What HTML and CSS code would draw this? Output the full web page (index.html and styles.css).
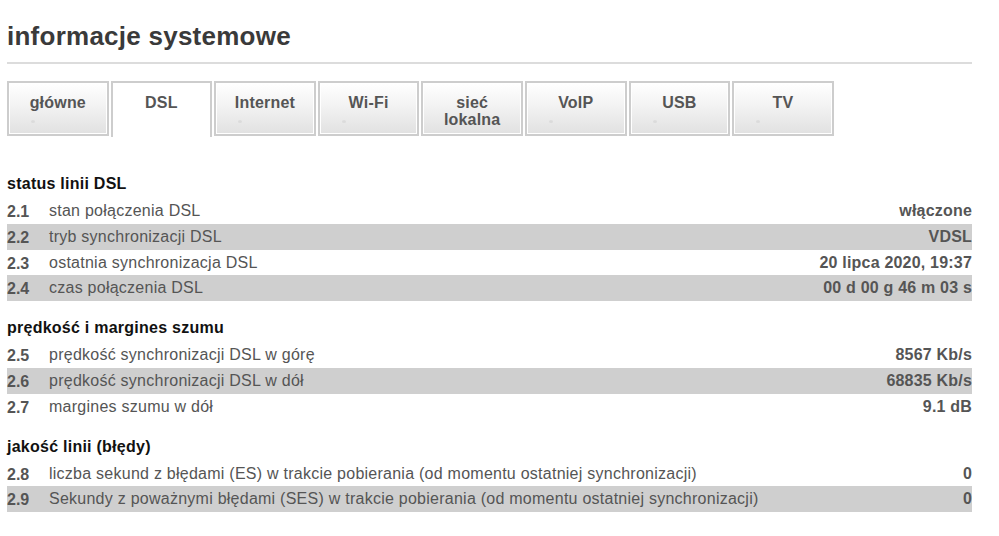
FILE: index.html
```
<!DOCTYPE html>
<html lang="pl">
<head>
<meta charset="utf-8">
<title>informacje systemowe</title>
<link rel="stylesheet" href="styles.css">
</head>
<body>
<div class="page">
  <h1 class="title">informacje systemowe</h1>
  <div class="tabs">
    <div class="tab">główne</div>
    <div class="tab active">DSL</div>
    <div class="tab">Internet</div>
    <div class="tab">Wi-Fi</div>
    <div class="tab">sieć<br>lokalna</div>
    <div class="tab">VoIP</div>
    <div class="tab">USB</div>
    <div class="tab">TV</div>
  </div>

  <div class="section first">
    <h3 class="sec-title">status linii DSL</h3>
    <div class="row"><span class="num">2.1</span><span class="label">stan połączenia DSL</span><span class="val">włączone</span></div>
    <div class="row alt"><span class="num">2.2</span><span class="label">tryb synchronizacji DSL</span><span class="val">VDSL</span></div>
    <div class="row"><span class="num">2.3</span><span class="label">ostatnia synchronizacja DSL</span><span class="val">20 lipca 2020, 19:37</span></div>
    <div class="row alt"><span class="num">2.4</span><span class="label">czas połączenia DSL</span><span class="val">00 d 00 g 46 m 03 s</span></div>
  </div>

  <div class="section">
    <h3 class="sec-title">prędkość i margines szumu</h3>
    <div class="row"><span class="num">2.5</span><span class="label">prędkość synchronizacji DSL w górę</span><span class="val">8567 Kb/s</span></div>
    <div class="row alt"><span class="num">2.6</span><span class="label">prędkość synchronizacji DSL w dół</span><span class="val">68835 Kb/s</span></div>
    <div class="row"><span class="num">2.7</span><span class="label">margines szumu w dół</span><span class="val">9.1 dB</span></div>
  </div>

  <div class="section">
    <h3 class="sec-title">jakość linii (błędy)</h3>
    <div class="row"><span class="num">2.8</span><span class="label">liczba sekund z błędami (ES) w trakcie pobierania (od momentu ostatniej synchronizacji)</span><span class="val">0</span></div>
    <div class="row alt"><span class="num">2.9</span><span class="label">Sekundy z poważnymi błędami (SES) w trakcie pobierania (od momentu ostatniej synchronizacji)</span><span class="val">0</span></div>
  </div>
</div>
</body>
</html>
```
FILE: styles.css
```
html, body {
  margin: 0;
  padding: 0;
  background: #fff;
}
body {
  font-family: "Liberation Sans", Arial, sans-serif;
  color: #555;
}
.page {
  width: 965px;
  margin-left: 7px;
}
.title {
  margin: 21px 0 0;
  font-size: 26px;
  line-height: 30px;
  font-weight: bold;
  letter-spacing: 0.25px;
  color: #3a3a3a;
  padding-bottom: 11px;
  border-bottom: 2px solid #dcdcdc;
}
.tabs {
  display: flex;
  gap: 2px;
  margin-top: 17px;
  align-items: flex-start;
}
.tab {
  position: relative;
  box-sizing: border-box;
  width: 101.6px;
  height: 55px;
  border: 2px solid #cdcdcd;
  box-shadow: inset 0 0 0 1px #fff;
  background: linear-gradient(#ffffff 0%, #f4f4f4 40%, #e1e1e1 100%);
  padding-top: 11px;
  text-align: center;
  font-weight: bold;
  font-size: 16px;
  line-height: 17px;
  letter-spacing: 0.2px;
  color: #555;
}
.tab::after {
  content: "";
  position: absolute;
  left: 22px;
  top: 37px;
  width: 4px;
  height: 3px;
  border-radius: 50%;
  background: rgba(0, 0, 0, 0.06);
}
.tab.active {
  height: 56px;
  border-bottom: none;
  background: #fff;
  box-shadow: none;
}
.tab.active::after {
  display: none;
}
.section {
  margin-top: 17px;
}
.section.first {
  margin-top: 37px;
}
.sec-title {
  margin: 0 0 4px;
  font-size: 16px;
  line-height: 20px;
  font-weight: bold;
  letter-spacing: 0.25px;
  color: #111;
}
.row {
  display: flex;
  height: 25.8px;
  line-height: 25.8px;
  font-size: 16px;
  color: #555;
}
.row.alt {
  background: #cfcfcf;
}
.num {
  width: 42px;
  flex: none;
  font-weight: bold;
  position: relative;
  top: 1px;
}
.label {
  flex: 1;
  white-space: nowrap;
  letter-spacing: 0.25px;
}
.val {
  font-weight: bold;
  text-align: right;
  white-space: nowrap;
  letter-spacing: 0.2px;
}
```
